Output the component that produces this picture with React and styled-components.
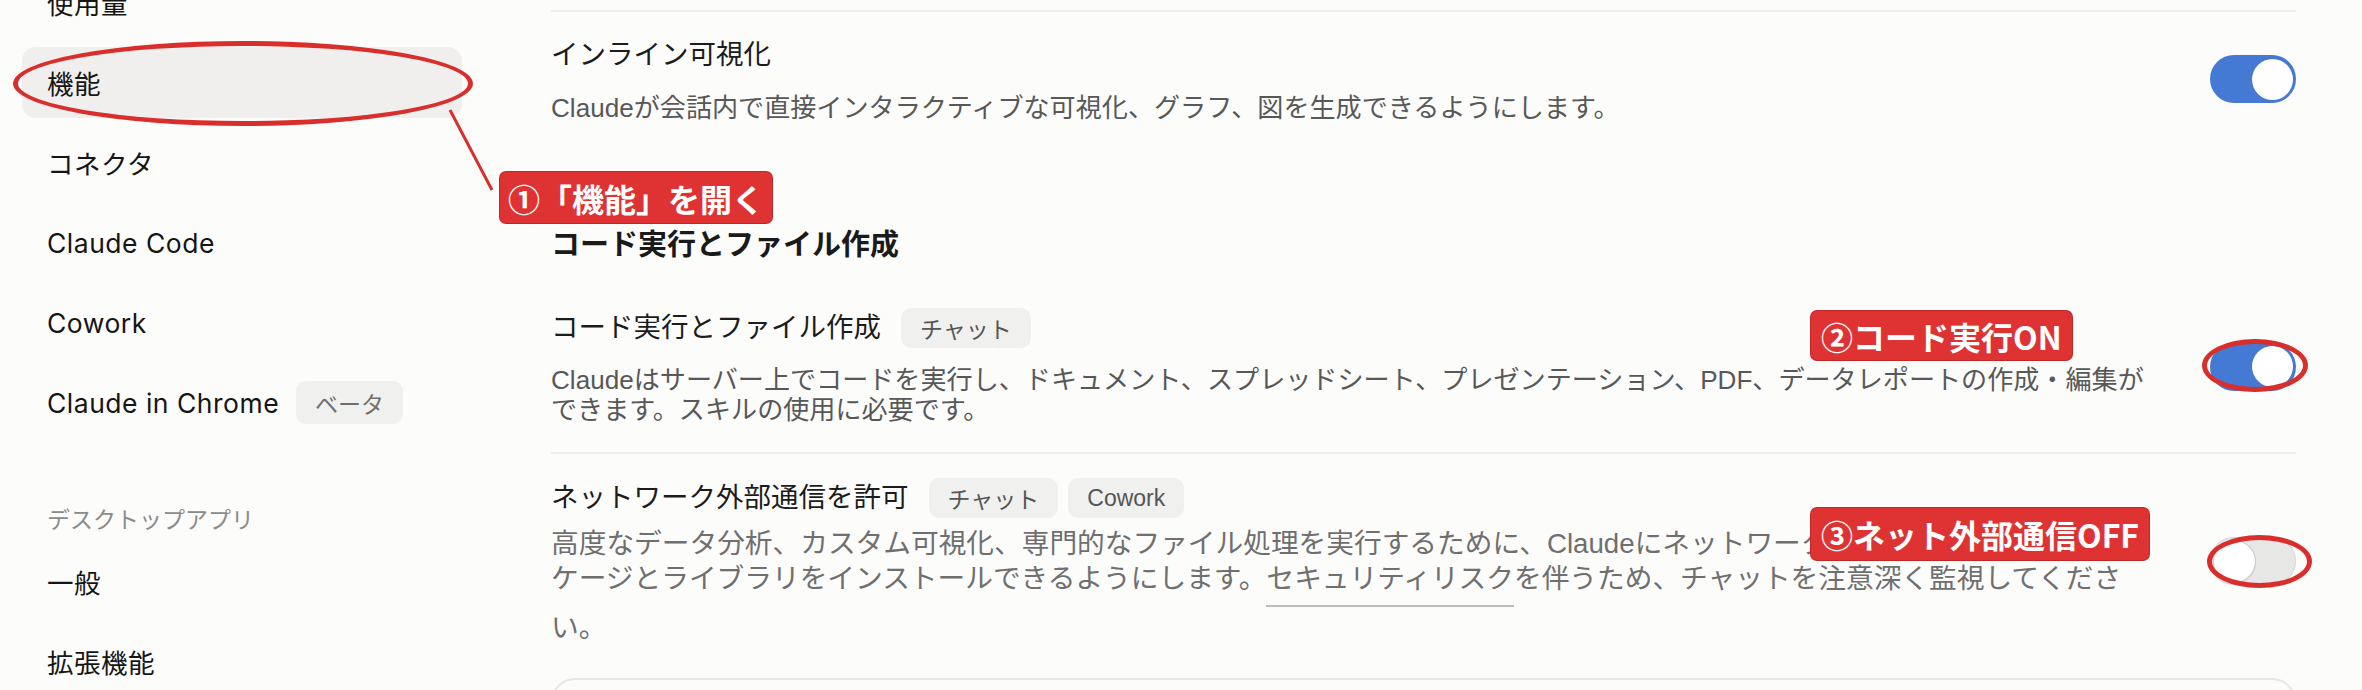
import React from 'react';
import styled, { createGlobalStyle } from 'styled-components';

const GlobalStyle = createGlobalStyle`
  html, body {
    margin: 0;
    padding: 0;
    background: #fcfcfb;
  }
  body {
    overflow: hidden;
  }
`;

const Page = styled.div`
  position: relative;
  display: flex;
  align-items: flex-start;
  width: 2362px;
  height: 690px;
  overflow: hidden;
  background: #fcfcfb;
  font-family: 'Liberation Sans', 'Noto Sans CJK JP', sans-serif;
`;

const Sidebar = styled.nav`
  display: flex;
  flex-direction: column;
  gap: 9px;
  width: 440px;
  flex-shrink: 0;
  margin: -33px 0 0 22px;
  font-family: Inter, 'Noto Sans CJK JP', sans-serif;
`;

const NavItem = styled.div`
  display: flex;
  align-items: center;
  gap: 17px;
  height: 71px;
  padding-left: 25px;
  border-radius: 14px;
  background: ${p => (p.$active ? '#f0efed' : 'transparent')};
  color: #151515;
  font-size: 26.5px;
  letter-spacing: 0.5px;
`;

const NavLabel = styled.div`
  margin: 57.5px 0 2.5px;
  padding-left: 25px;
  line-height: 30px;
  font-size: 23px;
  color: #8b8b8b;
`;

const Badge = styled.span`
  display: inline-flex;
  align-items: center;
  height: ${p => p.$h || 40}px;
  padding: 0 19px;
  border-radius: 10px;
  background: #f0f0ee;
  color: ${p => (p.$soft ? '#707070' : '#555')};
  font-size: 23px;
  letter-spacing: 0;
  font-family: 'Liberation Sans', 'Noto Sans CJK JP', sans-serif;
`;

const Main = styled.main`
  width: 1745px;
  margin-left: 89px;
  padding-top: 10px;
`;

const Divider = styled.div`
  height: 2px;
  background: #eeeeec;
`;

const Row = styled.section`
  display: flex;
  align-items: center;
  justify-content: space-between;
  gap: 40px;
  margin-top: ${p => p.$mt || 0}px;
  padding: ${p => p.$pt || 0}px 0 ${p => p.$pb || 0}px;
`;

const Info = styled.div`
  flex: 1;
  min-width: 0;
`;

const TitleLine = styled.div`
  display: flex;
  align-items: center;
  gap: 10px;
  height: 40px;
`;

const Title = styled.h3`
  margin: 0 10px 0 0;
  font-size: 27.5px;
  font-weight: 400;
  line-height: 36px;
  color: #1c1c1c;
`;

const Description = styled.p`
  margin: ${p => p.$mt}px 0 0;
  font-size: ${p => p.$size}px;
  line-height: ${p => p.$lh}px;
  color: ${p => (p.$muted ? '#6f6f6f' : '#585858')};
  white-space: nowrap;
`;

const RiskLink = styled.span`
  display: inline-block;
  padding-bottom: 9px;
  margin-bottom: 3px;
  border-bottom: 2px solid #bdbdbd;
  line-height: 35px;
`;

const Heading = styled.h2`
  margin: 102px 0 0;
  font-size: 29px;
  font-weight: 600;
  line-height: 40px;
  color: #1a1a1a;
`;

const Toggle = styled.div`
  position: relative;
  flex-shrink: 0;
  width: 86px;
  height: 48px;
  border-radius: 24px;
  background: ${p => (p.$on ? '#4479d4' : '#e7e7e5')};
  box-shadow: ${p => (p.$on ? 'none' : 'inset 0 0 0 1px #d9d9d7')};

  &::after {
    content: '';
    position: absolute;
    top: 3.5px;
    left: ${p => (p.$on ? '41.5px' : '3.5px')};
    width: 41px;
    height: 41px;
    border-radius: 50%;
    background: #fff;
    box-shadow: ${p => (p.$on ? 'none' : '0 0 0 1px #c9c9c9, 0 1px 2px rgba(0,0,0,0.15)')};
  }
`;

const FieldBox = styled.div`
  height: 100px;
  margin-top: 33px;
  border: 2px solid #e6e6e4;
  border-radius: 24px;
`;

const Annotation = styled.div`
  position: absolute;
  left: ${p => p.$x}px;
  top: ${p => p.$y}px;
  height: ${p => p.$h}px;
  padding: 0 ${p => p.$px || 10}px;
  display: flex;
  align-items: center;
  border-radius: 6px;
  background: #df3333;
  box-shadow: 0 0 0 1px #c42626;
  color: #fff;
  font-family: 'Noto Sans CJK JP', sans-serif;
  font-weight: 700;
  font-size: 32px;
  white-space: nowrap;
  z-index: 3;
`;

const Ring = styled.div`
  position: absolute;
  left: ${p => p.$x}px;
  top: ${p => p.$y}px;
  width: ${p => p.$w}px;
  height: ${p => p.$h}px;
  box-sizing: border-box;
  border: 5px solid #d92f2c;
  border-radius: 50%;
  z-index: 2;
`;

const Leader = styled.svg`
  position: absolute;
  left: 0;
  top: 0;
  z-index: 2;
  pointer-events: none;
`;

const App = () => (
  <>
    <GlobalStyle />
    <Page>
      <Sidebar>
        <NavItem>使用量</NavItem>
        <NavItem $active>機能</NavItem>
        <NavItem>コネクタ</NavItem>
        <NavItem>Claude Code</NavItem>
        <NavItem>Cowork</NavItem>
        <NavItem>
          Claude in Chrome
          <Badge $h={43} $soft>ベータ</Badge>
        </NavItem>
        <NavLabel>デスクトップアプリ</NavLabel>
        <NavItem>一般</NavItem>
        <NavItem>拡張機能</NavItem>
      </Sidebar>

      <Main>
        <Divider />
        <Row $pt={23}>
          <Info>
            <TitleLine>
              <Title>インライン可視化</Title>
            </TitleLine>
            <Description $mt={18} $size={26.1} $lh={30}>
              Claudeが会話内で直接インタラクティブな可視化、グラフ、図を生成できるようにします。
            </Description>
          </Info>
          <Toggle $on />
        </Row>

        <Heading>コード実行とファイル作成</Heading>

        <Row $mt={43} $pb={27}>
          <Info>
            <TitleLine>
              <Title>コード実行とファイル作成</Title>
              <Badge>チャット</Badge>
            </TitleLine>
            <Description $mt={17} $size={26.1} $lh={30}>
              Claudeはサーバー上でコードを実行し、ドキュメント、スプレッドシート、プレゼンテーション、PDF、データレポートの作成・編集が
              <br />
              できます。スキルの使用に必要です。
            </Description>
          </Info>
          <Toggle $on />
        </Row>
        <Divider />

        <Row $pt={24}>
          <Info>
            <TitleLine>
              <Title>ネットワーク外部通信を許可</Title>
              <Badge>チャット</Badge>
              <Badge>Cowork</Badge>
            </TitleLine>
            <Description $mt={7.5} $size={27.7} $lh={35} $muted>
              高度なデータ分析、カスタム可視化、専門的なファイル処理を実行するために、Claudeにネットワークアクセスを許可してパッ
              <br />
              ケージとライブラリをインストールできるようにします。<RiskLink>セキュリティリスク</RiskLink>を伴うため、チャットを注意深く監視してくださ
              <br />
              い。
            </Description>
          </Info>
          <Toggle />
        </Row>

        <FieldBox />
      </Main>

      <Ring $x={13} $y={41} $w={460} $h={85} />
      <Ring $x={2202} $y={339} $w={106} $h={53} />
      <Ring $x={2207} $y={535} $w={105} $h={53} />
      <Leader width="600" height="260">
        <line x1="450" y1="110" x2="492" y2="190" stroke="#d92f2c" strokeWidth="3" />
      </Leader>
      <Annotation $x={500} $y={172} $h={51} $px={8}>①「機能」を開く</Annotation>
      <Annotation $x={1811} $y={311} $h={49}>②コード実行ON</Annotation>
      <Annotation $x={1811} $y={508} $h={52}>③ネット外部通信OFF</Annotation>
    </Page>
  </>
);

export default App;
